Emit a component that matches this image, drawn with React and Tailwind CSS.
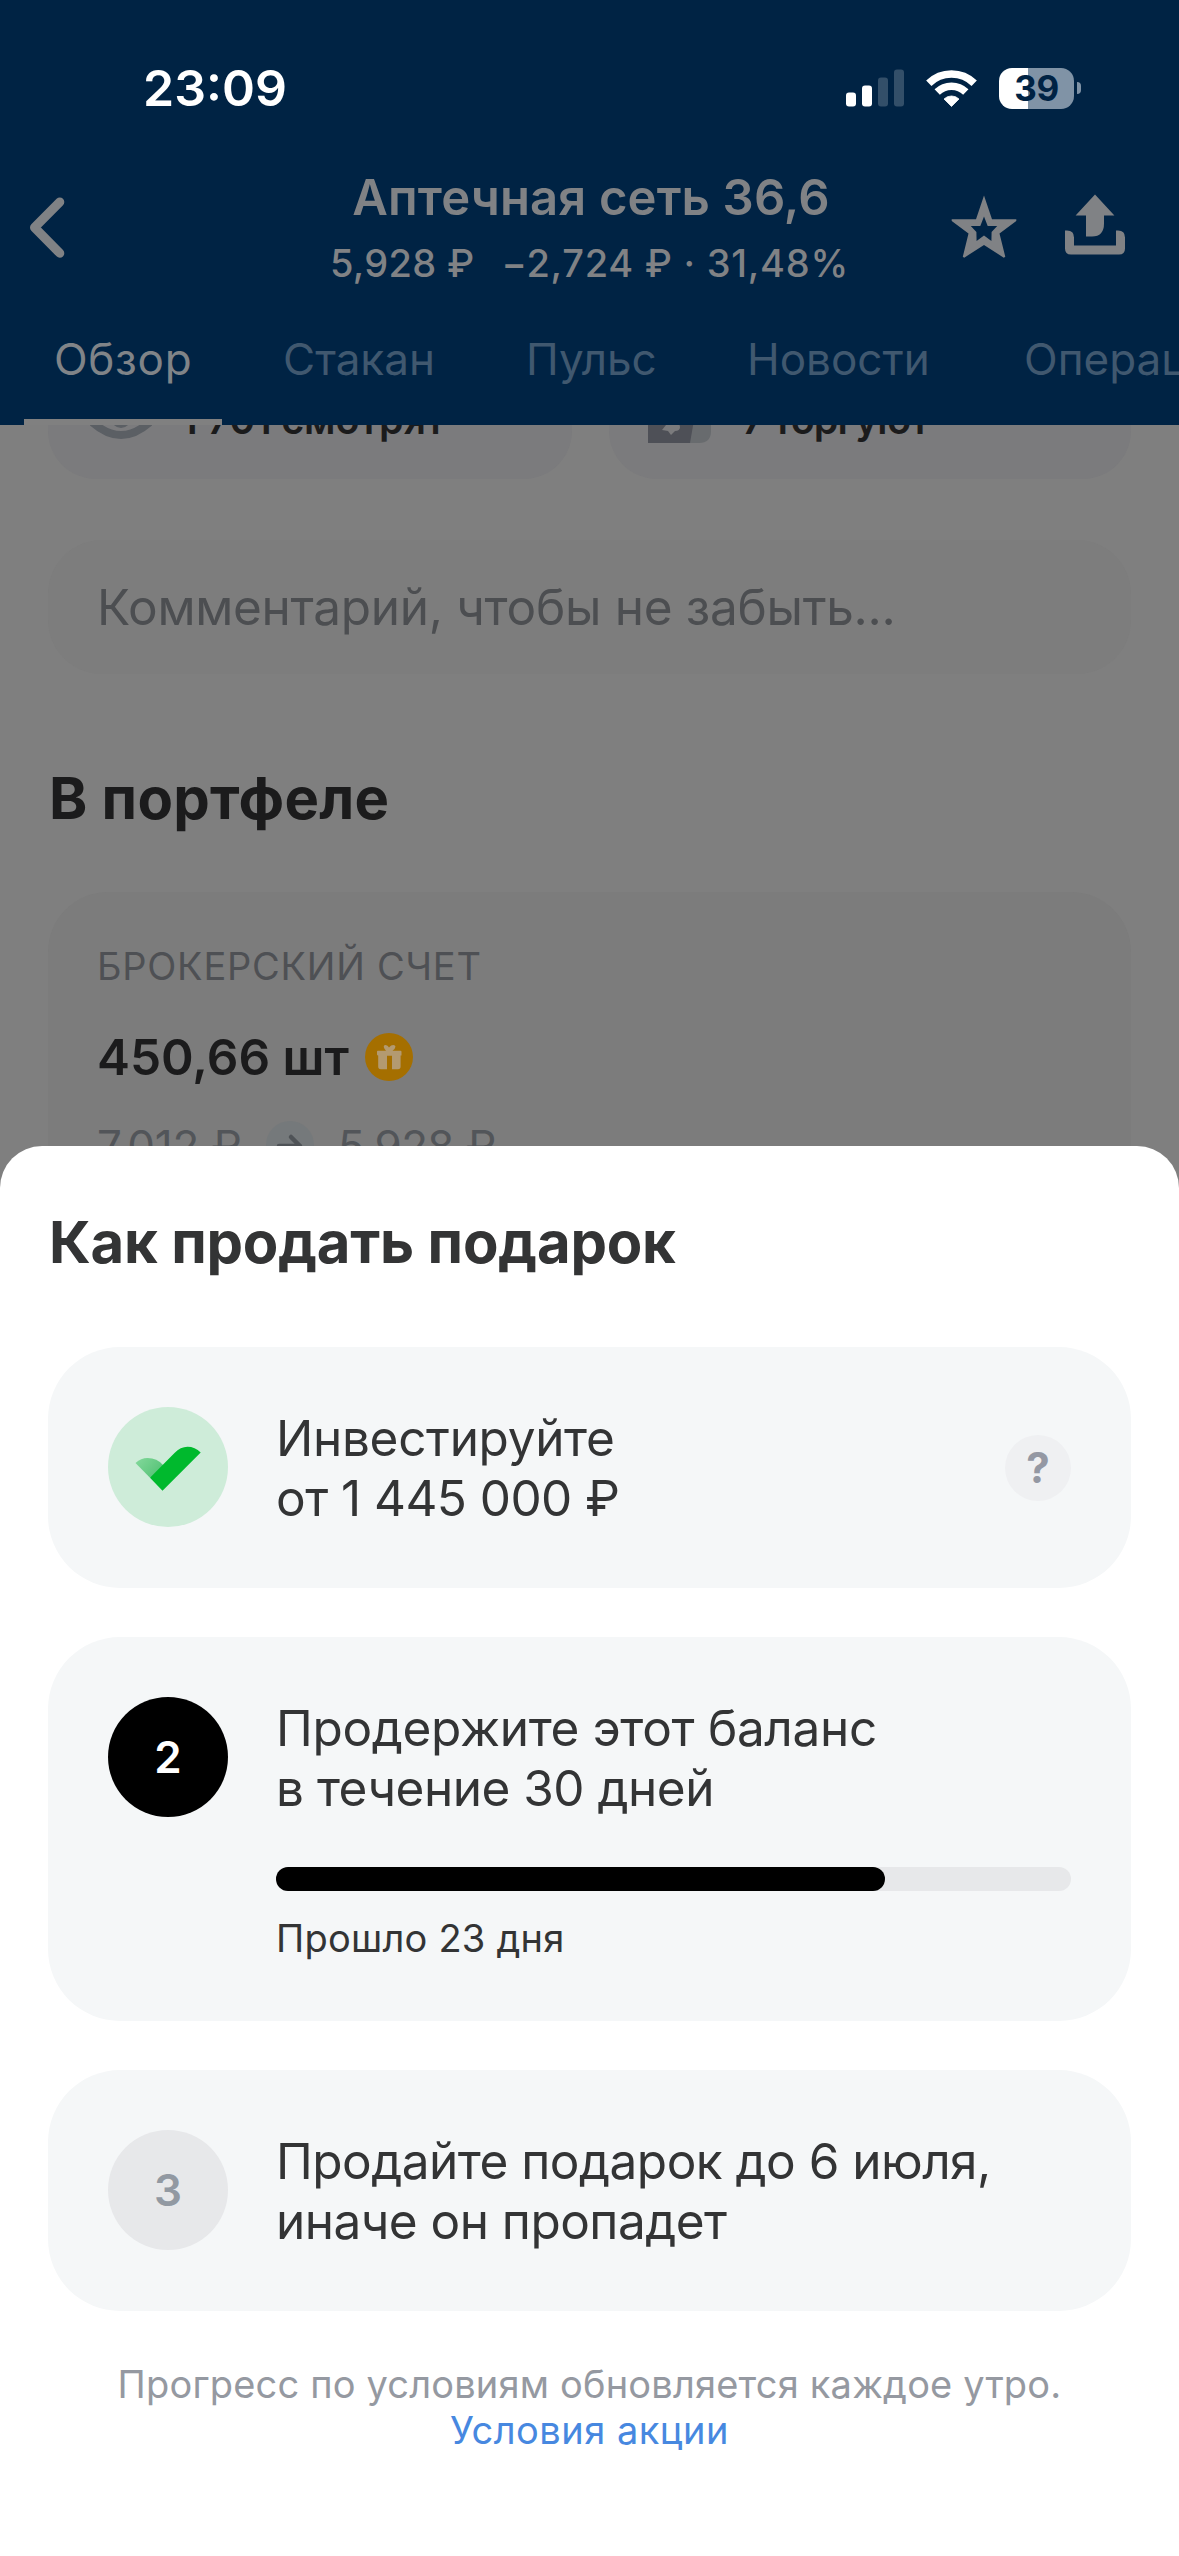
import React from "react";

const tabs = [
  { label: "Обзор", active: true },
  { label: "Стакан" },
  { label: "Пульс" },
  { label: "Новости" },
  { label: "Операции" },
];

function StatusBar() {
  return (
    <div className="flex h-[60px] items-center justify-between pr-[98px] pl-[143px] text-white">
      <span className="text-[50px] leading-[60px] font-semibold">23:09</span>
      <div className="flex items-center gap-[22px]">
        <div className="flex items-center gap-[22px]">
          <svg className="h-[38px] w-[58px]" viewBox="0 0 58 38">
            <rect x="0" y="23.5" width="10" height="14" rx="3" fill="#fff" />
            <rect x="16" y="16.5" width="10" height="21" rx="3" fill="#fff" />
            <rect x="32" y="8.5" width="10" height="29" rx="3" fill="#334f69" />
            <rect x="48" y="0.5" width="10" height="37" rx="3" fill="#334f69" />
          </svg>
          <svg className="h-[38px] w-[51px]" viewBox="0 0 51 38">
            <g fill="none" stroke="#fff" strokeWidth="7.6">
              <path d="M2.8 14.2 A32.5 32.5 0 0 1 48.2 14.2" />
              <path d="M11.2 23 A20.5 20.5 0 0 1 39.8 23" />
            </g>
            <path d="M25.5 37.5 L18 30 A10.8 10.8 0 0 1 33 30 Z" fill="#fff" stroke="#fff" strokeWidth="0.8" strokeLinejoin="round" />
          </svg>
        </div>
        <div className="flex items-center gap-[3px]">
          <div className="flex h-[41px] w-[75px] items-center justify-center rounded-[13px] bg-linear-to-r from-white from-[39%] to-[#8093a6] to-[39%] text-[35px] leading-[41px] font-bold tracking-[-0.5px] text-[#002344]">
            39
          </div>
          <div className="h-[12px] w-[4px] rounded-r-full bg-[#8093a6]" />
        </div>
      </div>
    </div>
  );
}

function NavBar() {
  return (
    <div className="mt-[50px] grid h-[119px] grid-cols-[1fr_auto_1fr] items-center text-[#808285]">
      <svg className="ml-[26px] h-[70px] w-[44px]" viewBox="26 192.5 44 70">
        <path d="M59.8 201.5 L34.5 227 L59.8 252.7" fill="none" stroke="currentColor" strokeWidth="9" strokeLinecap="round" strokeLinejoin="round" />
      </svg>
      <div className="flex flex-col items-center gap-[11px]">
        <h1 className="pl-[3px] text-[49px] leading-[60px] font-semibold tracking-[0.14px]">Аптечная сеть 36,6</h1>
        <div className="flex gap-[27px] text-[38px] leading-[48px] font-medium">
          <span className="tracking-[0.31px]">5,928 ₽</span>
          <span className="tracking-[0.75px]">−2,724 ₽ · 31,48%</span>
        </div>
      </div>
      <div className="flex justify-end gap-[47px] pr-[53px]">
        <svg className="h-[80px] w-[66px]" viewBox="951 187.5 66 80">
          <path
            d="M984 195 L992 218.7 L1016.3 218.7 L1016.3 220.5 L999.5 233 L1005.3 256.3 L1003.8 257.2 L984 244.5 L964.2 257.2 L962.8 256.3 L968.5 233 L951.7 220.5 L951.7 218.7 L976 218.7 Z M984 216 L980.3 225.6 L970.8 225.6 L976.4 231.6 L976.6 240.6 L984 235 L991.4 240.6 L991.6 231.6 L997.2 225.6 L987.7 225.6 Z"
            fill="currentColor"
            fillRule="evenodd"
          />
        </svg>
        <svg className="h-[80px] w-[62px]" viewBox="1064 187.5 62 80">
          <path d="M1095 194 L1114.4 215 H1104 V223 Q1104 236 1092 236 H1086 V215 H1075.6 Z" fill="currentColor" />
          <path d="M1065 230 H1067 Q1074 230 1074 237 V245 H1116 V230 H1118 Q1125 230 1125 237 V248 Q1125 254 1119 254 H1071 Q1065 254 1065 248 Z" fill="currentColor" />
        </svg>
      </div>
    </div>
  );
}

function Tabs() {
  return (
    <div className="mt-[45px] grid grid-cols-[229px_243px_221px_277px_300px] pl-[24px]">
      {tabs.map((tab) => (
        <div key={tab.label} className="h-[93px] whitespace-nowrap">
          <div className={tab.active ? "h-[87px] pl-[30px] text-[44px] leading-[54px] tracking-[0.7px] text-[#808488]" : "h-[87px] pl-[30px] text-[44px] leading-[54px] text-[#40586f]"}>
            {tab.label}
          </div>
          {tab.active && <div className="h-[6px] w-[198px] bg-[#808080]" />}
        </div>
      ))}
    </div>
  );
}

function Portfolio() {
  return (
    <div className="h-[800px] overflow-hidden px-[48px] text-[#1b1b1c]">
      <div className="-mt-[64px] grid grid-cols-[524px_522px] gap-[37px] text-[39.5px] leading-[48px] font-semibold">
        <div className="flex h-[118px] items-center rounded-[48px] bg-[#7b7b7d] pl-[42px]">
          <svg className="mr-[29px] h-[42px] w-[62px]" viewBox="89 399 62 42">
            <path d="M90 421 Q105 435 120 435 Q135 435 150 421 Q135 403 120 403 Q105 403 90 421 Z" fill="none" stroke="#5b5f64" strokeWidth="8" strokeLinejoin="round" />
            <circle cx="120" cy="418" r="10" fill="#5b5f64" />
          </svg>
          <span className="tracking-[-0.2px]">1 701 смотрят</span>
        </div>
        <div className="flex h-[118px] items-center rounded-[48px] bg-[#7b7b7d] pl-[39px]">
          <svg className="mr-[31px] h-[46px] w-[63px]" viewBox="648 397 63 46">
            <path d="M680 397 H711 V431 Q711 443 699 443 H680 Z" fill="#686b6e" />
            <path d="M648 397 H698 L690 443 H648 Z" fill="#4e5057" />
            <path d="M667 416 L678 418 L680 427 Q680 431 675 431 L671 435 L668 431 L662 430 L666 425 Z" fill="#7b7b7d" />
          </svg>
          <span className="tracking-[-0.9px]">7 торгуют</span>
        </div>
      </div>

      <div className="mt-[61px] flex h-[134px] items-center rounded-[54px] bg-[#7d7d7d] pl-[49px] text-[49.5px] leading-[60px] tracking-[-0.3px] text-[#4c4e51]">
        Комментарий, чтобы не забыть...
      </div>

      <h2 className="mt-[88px] pl-px text-[58px] leading-[72px] font-bold tracking-[0.25px]">В портфеле</h2>

      <div className="mt-[58px] h-[400px] rounded-[60px] bg-[#7c7c7c] px-[49px] pt-[50px]">
        <div className="text-[38px] leading-[48px] tracking-[0.75px] text-[#4e5054]">БРОКЕРСКИЙ СЧЕТ</div>
        <div className="mt-[37px] flex h-[60px] items-center gap-[16px]">
          <span className="text-[49.5px] leading-[60px] font-semibold">450,66 шт</span>
          <svg className="-mt-px h-[48px] w-[48px]" viewBox="0 0 48 48">
            <circle cx="24" cy="24" r="24" fill="#a56f00" />
            <path
              d="M24 14.5 C21.5 11 18.5 11.5 18.8 14 Q19 15.8 21 17.8 H12.8 Q12 17.8 12 18.8 V21.5 Q12 22.5 13.2 22.5 V33.6 Q13.2 36.2 15.8 36.2 H22 V22.8 H27 V36.2 H33 Q35.6 36.2 35.6 33.6 V22.5 H36.5 V18.8 Q36.5 17.8 35.5 17.8 H27.5 Q30.3 15.8 30.4 13.8 C30.5 11.5 26.5 11 24 14.5 Z"
              fill="#b39a71"
            />
          </svg>
        </div>
        <div className="mt-[32px] flex text-[44px] leading-[54px] text-[#525559]">
          <span className="w-[169px] tracking-[-0.3px]">7,012 ₽</span>
          <svg className="mt-[2px] mr-[24px] h-[48px] w-[48px]" viewBox="0 0 48 48">
            <circle cx="24" cy="24" r="24" fill="#75797b" />
            <path d="M13 25 H34 M25 16 L34 25 L25 34" fill="none" stroke="#4f5357" strokeWidth="4.5" strokeLinecap="round" strokeLinejoin="round" />
          </svg>
          <span className="tracking-[-0.7px]">5,928 ₽</span>
        </div>
      </div>
    </div>
  );
}

function Step({ badge, title, children, action }) {
  return (
    <div className="flex gap-[48px] rounded-[72px] bg-[#f5f7f8] p-[60px]">
      {badge}
      <div className="flex-1">
        <div className="mt-px h-[120px] text-[49.5px] leading-[60px] whitespace-nowrap">{title}</div>
        {children}
      </div>
      {action}
    </div>
  );
}

function Sheet() {
  return (
    <div className="absolute inset-x-0 top-[1146px] bottom-0 rounded-t-[42px] bg-white px-[48px] pt-[60px] text-[#333435]">
      <h2 className="pl-px text-[58px] leading-[72px] font-bold tracking-[-0.2px]">Как продать подарок</h2>

      <div className="mt-[69px] flex flex-col gap-[49px]">
        <Step
          badge={
            <svg className="h-[120px] w-[120px]" viewBox="108 1407 120 120">
              <defs>
                <linearGradient id="leaf" x1="0" y1="0" x2="1" y2="0.6">
                  <stop offset="0" stopColor="#84d99c" />
                  <stop offset="1" stopColor="#55c276" />
                </linearGradient>
              </defs>
              <circle cx="168" cy="1467" r="60" fill="#ceecd9" />
              <path d="M135.5 1463 Q141 1458 147.5 1458 Q157 1458 163 1465 L164 1473 L150 1477.7 Z" fill="url(#leaf)" />
              <path d="M150 1477.7 L174.5 1453 Q180.5 1446.7 187.5 1446.7 Q195 1446.7 200.7 1452.5 L162.5 1490.7 Z" fill="#00b92d" />
            </svg>
          }
          title={
            <>
              <div className="tracking-[-0.31px]">Инвестируйте</div>
              <div className="tracking-[-0.55px]">от 1 445 000 ₽</div>
            </>
          }
          action={
            <div className="flex h-[66px] w-[66px] items-center justify-center self-center rounded-full bg-[#eff0f2] text-[42px] leading-[48px] font-bold text-[#9498a3]">
              ?
            </div>
          }
        />
        <Step
          badge={
            <div className="flex h-[120px] w-[120px] items-center justify-center rounded-full bg-black text-[44px] font-semibold text-white">2</div>
          }
          title={
            <>
              <div className="tracking-[-0.33px]">Продержите этот баланс</div>
              <div className="tracking-[-0.5px]">в течение 30 дней</div>
            </>
          }
        >
          <div className="mt-[49px] h-[24px] rounded-full bg-[#e7e8ea]">
            <div className="h-full w-[609px] rounded-full bg-black" />
          </div>
          <div className="mt-[23px] -mb-px text-[38px] leading-[48px] tracking-[0.22px]">Прошло 23 дня</div>
        </Step>
        <Step
          badge={
            <div className="flex h-[120px] w-[120px] items-center justify-center rounded-full bg-[#e7e8ea] text-[44px] font-semibold text-[#9299a2]">3</div>
          }
          title={
            <>
              <div className="tracking-[-0.52px]">Продайте подарок до 6 июля,</div>
              <div className="tracking-[-0.53px]">иначе он пропадет</div>
            </>
          }
        />
      </div>

      <div className="mt-[50px] text-center text-[38px] leading-[46px] text-[#9599a1]">
        <div className="tracking-[0.18px]">Прогресс по условиям обновляется каждое утро.</div>
        <a className="tracking-[0.49px] text-[#4788e0]">Условия акции</a>
      </div>
    </div>
  );
}

export default function App() {
  return (
    <div className="relative h-[2556px] w-[1179px] overflow-hidden bg-[#7f7f7f] font-['Inter',sans-serif]">
      <header className="h-[425px] overflow-hidden bg-[#002344] pt-[58px]">
        <StatusBar />
        <NavBar />
        <Tabs />
      </header>
      <Portfolio />
      <Sheet />
    </div>
  );
}
